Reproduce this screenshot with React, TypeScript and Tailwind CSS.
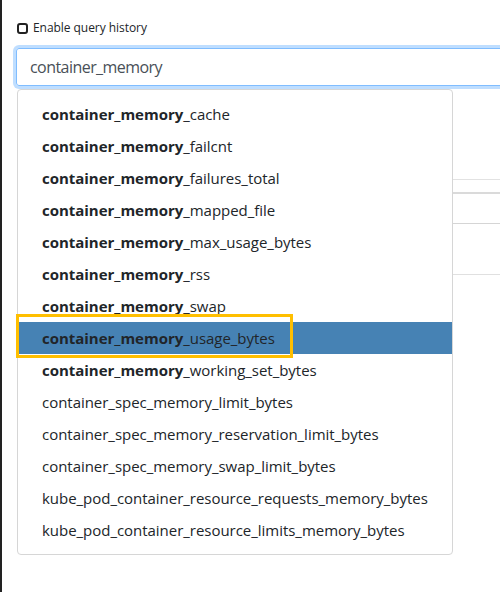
import React from "react";

const suggestions: { bold: string; rest: string }[] = [
  { bold: "container_memory", rest: "_cache" },
  { bold: "container_memory", rest: "_failcnt" },
  { bold: "container_memory", rest: "_failures_total" },
  { bold: "container_memory", rest: "_mapped_file" },
  { bold: "container_memory", rest: "_max_usage_bytes" },
  { bold: "container_memory", rest: "_rss" },
  { bold: "container_memory", rest: "_swap" },
  { bold: "container_memory", rest: "_usage_bytes" },
  { bold: "container_memory", rest: "_working_set_bytes" },
  { bold: "", rest: "container_spec_memory_limit_bytes" },
  { bold: "", rest: "container_spec_memory_reservation_limit_bytes" },
  { bold: "", rest: "container_spec_memory_swap_limit_bytes" },
  { bold: "", rest: "kube_pod_container_resource_requests_memory_bytes" },
  { bold: "", rest: "kube_pod_container_resource_limits_memory_bytes" },
];

const activeIndex = 7;

export default function App() {
  return (
    <div className="relative flex h-[592px] w-[500px] overflow-hidden bg-white font-['Open_Sans',sans-serif] text-[#212529]">
      <div className="w-[2px] shrink-0 bg-[#222]" />

      <div className="relative flex-1">
        {/* checkbox */}
        <label className="flex items-center gap-[5px] pl-[15px] pt-[21px] text-[12px] leading-[14px]">
          <span className="h-[11px] w-[11px] rounded-[3px] border-2 border-[#222]" />
          <span className="tracking-[-0.05px]">Enable query history</span>
        </label>

        {/* expression input */}
        <div className="ml-[14px] mt-[13px] h-[38px] w-[600px] rounded-[3px] border border-[#80bdff] pl-[13px] text-[16px] leading-[36px] text-[#495057] shadow-[0_0_0_3px_rgba(0,123,255,0.25)]">
          <span className="tracking-[-0.55px]">container_memory</span>
        </div>

        {/* content underneath the dropdown */}
        <div className="ml-[15px] mt-[10px] h-[35px] w-[40px] border-l-2 border-[#1d3f70]" />
        <div className="ml-[15px] h-[149px] border-l border-[#ddd]">
          <div className="h-[49px] border-b border-[#e2e2e2]" />
          <div className="h-[14px] border-b-2 border-[#dadada]" />
          <div className="h-[30px] border-b border-[#d5d5d5]" />
          <div className="h-[51px] border-b border-[#e0e0e0]" />
        </div>

        {/* autocomplete dropdown */}
        <div className="absolute left-[15px] top-[89px] w-[436px] rounded-[4px] border border-[#d6d6d6] bg-white py-[8px]">
          {suggestions.map((s, i) => (
            <div
              key={i}
              className={
                "h-[32px] whitespace-nowrap pl-[24px] text-[15px] leading-[32px] tracking-[-0.03px] " +
                (i === activeIndex ? "bg-[#4682b4]" : "")
              }
            >
              {s.bold && <b className="font-bold">{s.bold}</b>}
              {s.rest}
            </div>
          ))}
        </div>

        {/* highlight annotation */}
        <div className="absolute left-[14px] top-[314px] h-[44px] w-[277px] border-[3px] border-[#ffbf00]" />
      </div>
    </div>
  );
}
